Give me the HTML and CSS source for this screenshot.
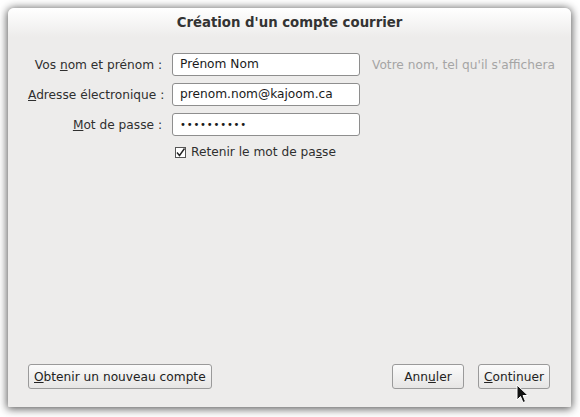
FILE: index.html
```html
<!DOCTYPE html>
<html lang="fr">
<head>
<meta charset="utf-8">
<title>Création d'un compte courrier</title>
<link rel="stylesheet" href="styles.css">
</head>
<body>
<div class="window">
  <div class="titlebar">Création d'un compte courrier</div>
  <div class="content">
    <div class="form">
      <label class="label">Vos <u>n</u>om et prénom :</label>
      <div class="input">Prénom Nom</div>
      <div class="hint">Votre nom, tel qu'il s'affichera</div>
      <label class="label"><u>A</u>dresse électronique :</label>
      <div class="input">prenom.nom@kajoom.ca</div>
      <div></div>
      <label class="label"><u>M</u>ot de passe :</label>
      <div class="input pw">••••••••••</div>
      <div></div>
      <div></div>
      <div class="check"><span class="box"><svg width="11" height="11" viewBox="0 0 11 11"><path d="M2 5.5 L4.5 8.5 L9.5 1.5" fill="none" stroke="#222" stroke-width="1.4"/></svg></span>Retenir le mot de pa<u>s</u>se</div>
      <div></div>
    </div>
    <div class="buttons">
      <button class="btn wide"><u>O</u>btenir un nouveau compte</button>
      <div class="right">
        <button class="btn">Ann<u>u</u>ler</button>
        <button class="btn"><u>C</u>ontinuer</button>
      </div>
    </div>
  </div>
  <svg class="cursor" width="13" height="20" viewBox="0 0 13 20"><path d="M1 1 L1 16 L4.5 12.5 L7 18.5 L9.5 17.5 L7 11.5 L12 11.5 Z" fill="#111" stroke="#fff" stroke-width="1"/></svg>
</div>
</body>
</html>
```
FILE: styles.css
```css
html, body { margin: 0; padding: 0; }
body {
  background: #ffffff;
  width: 580px;
  height: 417px;
  overflow: hidden;
  font-family: "DejaVu Sans", sans-serif;
  font-size: 12.2px;
  color: #2f2f2f;
}
.window {
  position: relative;
  margin: 8px 0 0 8px;
  width: 563px;
  height: 399px;
  background: #edeceb;
  border-radius: 6px 6px 1px 1px;
  box-shadow: 0 1px 8px 1px rgba(0,0,0,0.65);
  display: flex;
  flex-direction: column;
}
.titlebar {
  height: 26px;
  padding-top: 3px;
  border-radius: 6px 6px 0 0;
  background: linear-gradient(#ffffff, #edeceb);
  text-align: center;
  font-weight: bold;
  font-size: 13.3px;
  line-height: 24px;
  color: #333;
}
.content {
  flex: 1;
  display: flex;
  flex-direction: column;
  justify-content: space-between;
  padding: 16px 21px 18px 20px;
}
.form {
  display: grid;
  grid-template-columns: 134px 188px auto;
  column-gap: 10px;
  row-gap: 7px;
  align-items: center;
}
.label { text-align: right; white-space: nowrap; }
.hint { color: #a5a5a5; white-space: nowrap; margin-left: 2px; }
.input {
  height: 23px;
  box-sizing: border-box;
  border: 1px solid #8e8e8e;
  border-radius: 3px;
  background: #fff;
  padding: 0 7px;
  line-height: 21px;
  color: #1a1a1a;
}
.input.pw { font-size: 10px; letter-spacing: 0.8px; }
.check {
  display: flex;
  align-items: center;
  padding-left: 3px;
  margin-top: 2px;
}
.box {
  width: 11px;
  height: 11px;
  box-sizing: border-box;
  border: 1px solid #555;
  background: #fff;
  margin-right: 5px;
  display: flex;
}
.box svg { display: block; margin: -1px; }
.buttons {
  display: flex;
  justify-content: space-between;
  align-items: flex-end;
}
.right { display: flex; gap: 14px; }
.btn {
  font-family: "DejaVu Sans", sans-serif;
  font-size: 12.2px;
  color: #222;
  height: 25px;
  width: 72px;
  padding: 0;
  border: 1px solid #9a9a9a;
  border-radius: 3px;
  background: linear-gradient(#fbfbfb, #e6e5e4);
}
.btn.wide { width: auto; padding: 0 5px; }
.cursor { position: absolute; left: 508px; top: 376px; }
```
